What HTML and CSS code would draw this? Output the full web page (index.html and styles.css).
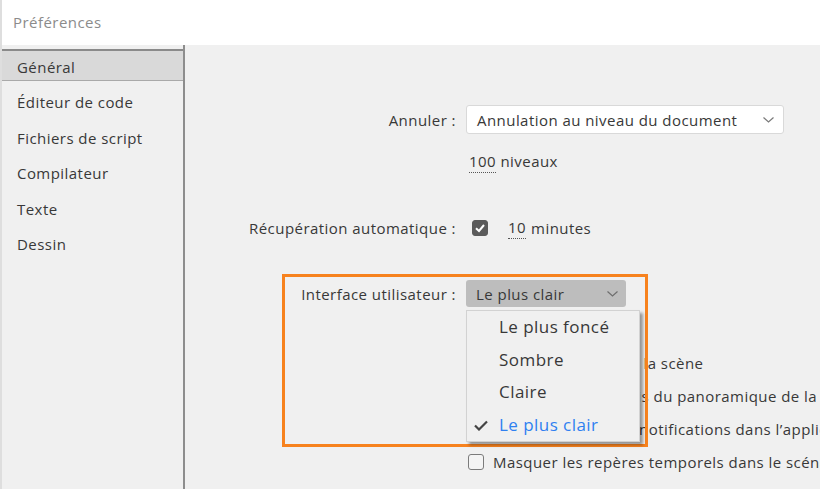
FILE: index.html
```html
<!DOCTYPE html>
<html lang="fr">
<head>
<meta charset="utf-8">
<title>Préférences</title>
<link rel="stylesheet" href="styles.css">
</head>
<body>
<div class="window">
  <header class="titlebar">Préférences</header>
  <div class="body">
    <nav class="sidebar">
      <div class="nav-item selected">Général</div>
      <div class="nav-item">Éditeur de code</div>
      <div class="nav-item">Fichiers de script</div>
      <div class="nav-item">Compilateur</div>
      <div class="nav-item">Texte</div>
      <div class="nav-item">Dessin</div>
    </nav>
    <main class="content">
      <div class="row row-undo">
        <div class="label">Annuler&nbsp;:</div>
        <div class="select select-wide">
          <span>Annulation au niveau du document</span>
          <svg class="chev" width="11" height="6" viewBox="0 0 11 6"><polyline points="0.5,0.5 5.5,5 10.5,0.5" fill="none" stroke="#7a7a7a" stroke-width="1.2"/></svg>
        </div>
      </div>
      <div class="row row-levels">
        <div class="label"></div>
        <div class="value"><span class="num">100</span> niveaux</div>
      </div>
      <div class="row row-recover">
        <div class="label">Récupération automatique&nbsp;:</div>
        <div class="value">
          <span class="cb cb-on"><svg width="16" height="16" viewBox="0 0 16 16"><polyline points="4,8.2 7,11 12,5" fill="none" stroke="#fff" stroke-width="2"/></svg></span>
          <span class="num num-min">10</span> minutes
        </div>
      </div>
      <div class="row row-ui">
        <div class="label">Interface utilisateur&nbsp;:</div>
        <div class="select select-ui">
          <span>Le plus clair</span>
          <svg class="chev" width="11" height="6" viewBox="0 0 11 6"><polyline points="0.5,0.5 5.5,5 10.5,0.5" fill="none" stroke="#6e6e6e" stroke-width="1.2"/></svg>
        </div>
        <ul class="menu">
          <li class="menu-item">Le plus foncé</li>
          <li class="menu-item">Sombre</li>
          <li class="menu-item">Claire</li>
          <li class="menu-item active">
            <svg class="tick" width="14" height="11" viewBox="0 0 14 11"><polyline points="1,5.5 5,9.5 13,1.5" fill="none" stroke="#444" stroke-width="2.2"/></svg>
            Le plus clair
          </li>
        </ul>
      </div>
      <div class="options">
        <div class="opt"><span class="cb"></span><span class="opt-text">Activer l’ombrage</span></div>
        <div class="opt"><span class="cb"></span><span class="opt-text">Activer les bords de la scène</span></div>
        <div class="opt"><span class="cb"></span><span class="opt-text">Activer les raccourcis du panoramique de la scène</span></div>
        <div class="opt"><span class="cb"></span><span class="opt-text">Activer les diverses notifications dans l’application</span></div>
        <div class="opt"><span class="cb"></span><span class="opt-text">Masquer les repères temporels dans le scénario</span></div>
      </div>
      <div class="highlight"></div>
    </main>
  </div>
</div>
</body>
</html>
```
FILE: styles.css
```css
* { box-sizing: border-box; }
html, body {
  margin: 0;
  padding: 0;
  width: 820px;
  height: 489px;
  overflow: hidden;
  background: #f0f0f0;
}
body {
  font-family: "Open Sans", "Noto Sans", sans-serif;
  font-size: 15px;
  letter-spacing: 0.45px;
  color: #383838;
}
.window {
  width: 820px;
  height: 489px;
  border-left: 2px solid #dedede;
  display: flex;
  flex-direction: column;
}
.titlebar {
  height: 45px;
  flex: none;
  background: #ffffff;
  color: #8b8b8b;
  padding-left: 11px;
  line-height: 44px;
  white-space: nowrap;
}
.body {
  flex: 1;
  display: flex;
  min-height: 0;
}
.sidebar {
  width: 183px;
  flex: none;
  border-right: 2px solid #8d8d8d;
  padding-top: 4px;
  background: #f0f0f0;
}
.nav-item {
  height: 32px;
  margin-bottom: 3.4px;
  border-top: 2px solid transparent;
  border-bottom: 1px solid transparent;
  padding-top: 3px;
  padding-left: 15px;
  line-height: 26px;
  white-space: nowrap;
}
.nav-item.selected {
  background: #d9d9d9;
  border-top-color: #8a8a8a;
  border-bottom-color: #a9a9a9;
}
.content {
  flex: 1;
  position: relative;
  padding-top: 60px;
  display: flex;
  flex-direction: column;
  overflow: hidden;
  white-space: nowrap;
}
.row {
  display: grid;
  grid-template-columns: 281px auto;
  justify-content: start;
  align-items: center;
}
.label {
  text-align: right;
  padding-right: 10px;
}
.select {
  display: flex;
  align-items: center;
  justify-content: space-between;
  border-radius: 3px;
  padding-left: 10px;
  padding-right: 9px;
}
.select-wide {
  width: 318px;
  height: 29px;
  background: #ffffff;
  border: 1px solid #d9d9d9;
}
.select-ui {
  width: 160px;
  height: 27px;
  background: #bdbdbd;
  padding-left: 10px;
  padding-right: 8px;
}
.row-undo { height: 29px; }
.row-levels { height: 20px; margin-top: 17px; }
.row-levels .value { padding-left: 3px; }
.num {
  border-bottom: 1px dotted #555;
  padding-bottom: 1px;
}
.row-recover { height: 20px; margin-top: 46px; }
.row-recover .value {
  display: flex;
  align-items: center;
  padding-left: 6px;
}
.num-min { margin-left: 20px; margin-right: 5px; }
.cb {
  display: inline-block;
  width: 16px;
  height: 16px;
  flex: none;
  border: 1.5px solid #7b7b7b;
  border-radius: 3px;
  background: #f4f4f4;
}
.cb-on {
  background: #5b5b5b;
  border-color: #5b5b5b;
  position: relative;
}
.cb-on svg {
  position: absolute;
  left: -1.5px;
  top: -1.5px;
}
.row-ui {
  height: 27px;
  margin-top: 43px;
  position: relative;
}
.menu {
  position: absolute;
  left: 281px;
  top: 30px;
  width: 174px;
  margin: 0;
  padding: 0;
  list-style: none;
  background: #f0f0f0;
  border: 1px solid #d2d2d2;
  box-shadow: 3px 3px 3px rgba(0, 0, 0, 0.38);
  z-index: 3;
  font-size: 17px;
}
.menu-item {
  height: 32.5px;
  line-height: 32.5px;
  padding-left: 32px;
  position: relative;
}
.menu-item.active { color: #2f80f0; }
.tick {
  position: absolute;
  left: 7px;
  top: 11px;
}
.options {
  padding-left: 283px;
  margin-top: 6px;
  display: flex;
  flex-direction: column;
}
.opt {
  height: 33px;
  display: flex;
  align-items: center;
}
.opt-text { margin-left: 9px; }
.highlight {
  position: absolute;
  left: 97px;
  top: 229px;
  width: 366px;
  height: 173px;
  border: 3px solid #f7821e;
  z-index: 2;
  pointer-events: none;
}
```
